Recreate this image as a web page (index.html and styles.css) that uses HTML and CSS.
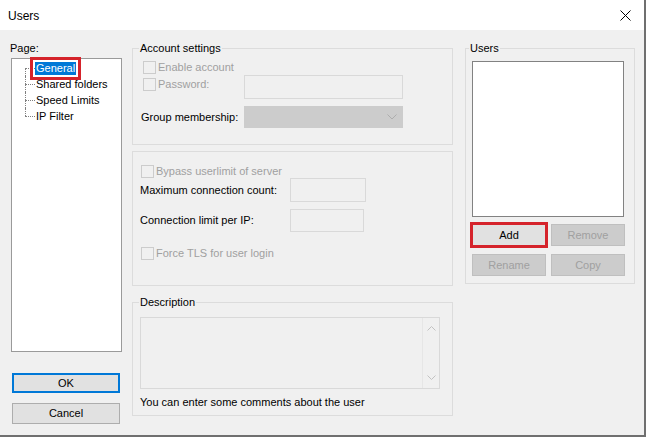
FILE: index.html
```html
<!DOCTYPE html>
<html>
<head>
<meta charset="utf-8">
<link rel="stylesheet" href="styles.css">
</head>
<body>
<div class="window">
  <div class="titlebar">
    <span class="title">Users</span>
    <svg class="close" width="11" height="11" viewBox="0 0 11 11"><path d="M0.5 0.5 L10.5 10.5 M10.5 0.5 L0.5 10.5" stroke="#000" stroke-width="1" fill="none"/></svg>
  </div>
  <div class="body">
    <div class="col-left">
      <div class="page-label">Page:</div>
      <div class="tree">
        <div class="tree-row first"><span class="conn"><span class="c-top"></span><span class="c-bot"></span></span><span class="node sel">General</span></div>
        <div class="tree-row"><span class="conn"><span class="c-top"></span><span class="c-bot"></span></span><span class="node">Shared folders</span></div>
        <div class="tree-row"><span class="conn"><span class="c-top"></span><span class="c-bot"></span></span><span class="node">Speed Limits</span></div>
        <div class="tree-row last"><span class="conn"><span class="c-top"></span><span class="c-bot"></span></span><span class="node">IP Filter</span></div>
      </div>
      <div class="btn ok">OK</div>
      <div class="btn cancel">Cancel</div>
    </div>

    <div class="col-mid">
      <div class="group g1">
        <span class="group-title">Account settings</span>
        <div class="row r-enable">
          <span class="chk"></span><span class="dis">Enable account</span>
        </div>
        <div class="row r-pass">
          <span class="chk"></span><span class="dis lbl-pass">Password:</span><span class="input inp-pass"></span>
        </div>
        <div class="row r-group">
          <span class="lbl-group">Group membership:</span>
          <span class="select"><svg width="10" height="6" viewBox="0 0 10 6"><path d="M0.5 0.5 L5 5 L9.5 0.5" stroke="#adadad" fill="none"/></svg></span>
        </div>
      </div>

      <div class="group g2">
        <div class="row r-bypass">
          <span class="chk"></span><span class="dis">Bypass userlimit of server</span>
        </div>
        <div class="row r-max">
          <span class="lbl-num">Maximum connection count:</span><span class="input inp-max"></span>
        </div>
        <div class="row r-ip">
          <span class="lbl-num">Connection limit per IP:</span><span class="input inp-ip"></span>
        </div>
        <div class="row r-tls">
          <span class="chk"></span><span class="dis">Force TLS for user login</span>
        </div>
      </div>

      <div class="group g3">
        <span class="group-title">Description</span>
        <div class="textarea">
          <div class="ta-text"></div>
          <div class="ta-scroll">
            <svg width="9" height="5" viewBox="0 0 9 5"><path d="M0.5 4.5 L4.5 0.5 L8.5 4.5" stroke="#c2c2c2" fill="none"/></svg>
            <svg width="9" height="5" viewBox="0 0 9 5"><path d="M0.5 0.5 L4.5 4.5 L8.5 0.5" stroke="#c2c2c2" fill="none"/></svg>
          </div>
        </div>
        <div class="hint">You can enter some comments about the user</div>
      </div>
    </div>

    <div class="col-right">
      <div class="group users">
        <span class="group-title">Users</span>
        <div class="listbox"></div>
        <div class="btn-row">
          <div class="btn add">Add</div>
          <div class="btn disabled">Remove</div>
        </div>
        <div class="btn-row r2">
          <div class="btn disabled">Rename</div>
          <div class="btn disabled">Copy</div>
        </div>
      </div>
    </div>
  </div>
</div>
</body>
</html>
```

FILE: styles.css
```css
* { box-sizing: border-box; }
html, body { margin: 0; padding: 0; }
body {
  width: 646px;
  height: 437px;
  overflow: hidden;
  font-family: "Liberation Sans", Arial, sans-serif;
  font-size: 11px;
  color: #000;
  background: #f0f0f0;
}
.window {
  width: 646px;
  height: 437px;
  border-right: 2px solid #6f6f6f;
  border-bottom: 2px solid #6f6f6f;
  background: #f0f0f0;
  display: flex;
  flex-direction: column;
}
.titlebar {
  height: 30px;
  background: #fff;
  display: flex;
  align-items: center;
  padding: 0 8px 0 8px;
}
.title { font-size: 12px; line-height: 14px; margin-top: 1px; }
.close { margin-left: auto; margin-right: 5px; margin-top: 1px; }

.body {
  display: flex;
  align-items: flex-start;
  padding-left: 10px;
  flex: 1;
}

/* left column */
.col-left { width: 113px; display: flex; flex-direction: column; }
.page-label { line-height: 13px; margin-top: 12px; }
.tree {
  margin-top: 3px;
  margin-left: 1px;
  width: 111px;
  height: 294px;
  background: #fff;
  border: 1px solid #9a9a9a;
  padding-top: 1px;
  padding-left: 13px;
}
.tree-row { display: flex; height: 16px; align-items: center; }
.conn { width: 10px; height: 16px; display: flex; flex-direction: column; }
.c-top { height: 8px; border-left: 1px dotted #808080; }
.c-bot { height: 8px; border-left: 1px dotted #808080; border-top: 1px dotted #808080; }
.first .c-top { border-left: none; }
.last .c-bot { border-left: none; }
.node { padding: 0 1px; line-height: 13px; white-space: nowrap; }
.node.sel {
  background: #0078d7;
  color: #fff;
  outline: 3px solid #d5232b;
  outline-offset: 2px;
}

.btn {
  display: flex;
  align-items: center;
  justify-content: center;
  background: #e1e1e1;
  border: 1px solid #adadad;
  line-height: 13px;
}
.ok {
  margin-top: 21px;
  margin-left: 2px;
  width: 108px;
  height: 20px;
  border: 2px solid #0078d7;
}
.cancel {
  margin-top: 10px;
  margin-left: 2px;
  width: 108px;
  height: 21px;
}

/* groups */
.group {
  border: 1px solid #dcdcdc;
  display: flex;
  flex-direction: column;
  align-items: flex-start;
}
.group-title {
  display: block;
  line-height: 13px;
  height: 13px;
  margin-top: -7px;
  margin-left: 6px;
  padding: 0 1px;
  background: #f0f0f0;
}
.row { display: flex; align-items: center; }
.chk {
  width: 13px;
  height: 13px;
  border: 1px solid #cccccc;
  background: #f0f0f0;
  margin-right: 2px;
  flex: none;
}
.dis { color: #a0a0a0; line-height: 13px; white-space: nowrap; }
.input {
  display: block;
  border: 1px solid #d9d9d9;
  background: #f0f0f0;
  flex: none;
}

.col-mid { width: 321px; margin-left: 9px; margin-top: 18px; display: flex; flex-direction: column; }
.g1 { height: 97px; }
.r-enable { margin-top: 6px; margin-left: 10px; }
.r-pass { margin-top: 1px; margin-left: 10px; align-items: flex-start; }
.r-pass .chk { margin-top: 3px; }
.r-pass .lbl-pass { width: 86px; margin-top: 3px; }
.inp-pass { width: 159px; height: 24px; }
.r-group { margin-top: 7px; margin-left: 8px; }
.lbl-group { width: 103px; white-space: nowrap; line-height: 13px; }
.select {
  width: 159px;
  height: 22px;
  background: #cccccc;
  border: 1px solid #cccccc;
  display: flex;
  align-items: center;
  justify-content: flex-end;
  padding-right: 5px;
}

.g2 { height: 135px; margin-top: 6px; }
.r-bypass { margin-top: 13px; margin-left: 8px; }
.r-max { margin-top: 0px; margin-left: 7px; }
.lbl-num { width: 150px; white-space: nowrap; line-height: 13px; }
.inp-max { width: 76px; height: 24px; }
.r-ip { margin-top: 7px; margin-left: 7px; }
.inp-ip { width: 74px; height: 23px; }
.r-tls { margin-top: 15px; margin-left: 8px; }

.g3 { height: 114px; margin-top: 16px; }
.g3 .group-title { margin-left: 6px; }
.textarea {
  margin-top: 8px;
  margin-left: 7px;
  width: 300px;
  height: 72px;
  border: 1px solid #d9d9d9;
  display: flex;
}
.ta-text { flex: 1; }
.ta-scroll {
  width: 17px;
  border-left: 1px solid #e6e6e6;
  display: flex;
  flex-direction: column;
  align-items: center;
  justify-content: space-between;
  padding: 8px 0 8px;
}
.hint { margin-top: 7px; margin-left: 7px; line-height: 13px; white-space: nowrap; }

/* right column */
.col-right { width: 170px; margin-left: 12px; margin-top: 18px; }
.users { height: 236px; }
.users .group-title { margin-left: 3px; }
.listbox {
  margin-top: 6px;
  margin-left: 6px;
  width: 152px;
  height: 156px;
  background: #fff;
  border: 1px solid #828282;
}
.btn-row { display: flex; gap: 5px; margin-left: 6px; margin-top: 7px; }
.btn-row .btn { width: 74px; height: 22px; }
.btn-row.r2 { margin-top: 8px; }
.btn.add { outline: 3px solid #d5232b; outline-offset: -1px; }
.btn.disabled { background: #cccccc; border-color: #bfbfbf; color: #a0a0a0; }
```
